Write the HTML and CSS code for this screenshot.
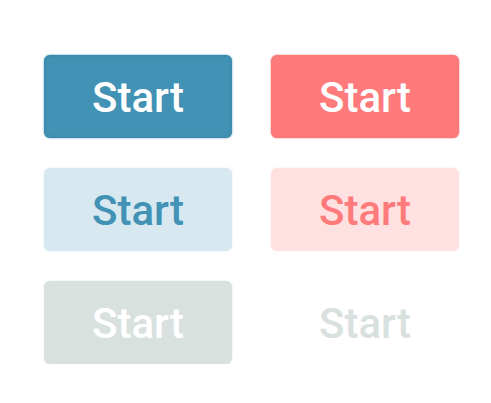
FILE: index.html
```html
<!DOCTYPE html>
<html>
<head>
<meta charset="utf-8">
<link rel="stylesheet" href="styles.css">
</head>
<body>
<div class="grid">
  <button class="btn primary">Start</button>
  <button class="btn danger">Start</button>
  <button class="btn primary-soft">Start</button>
  <button class="btn danger-soft">Start</button>
  <button class="btn disabled">Start</button>
  <button class="btn disabled-ghost">Start</button>
</div>
</body>
</html>
```
FILE: styles.css
```css
html, body {
  margin: 0;
  padding: 0;
  background: #ffffff;
}
body {
  padding: 55px 0 0 44px;
  font-family: Roboto, "Liberation Sans", sans-serif;
}
.grid {
  display: grid;
  grid-template-columns: 188px 188px;
  grid-auto-rows: 83px;
  column-gap: 39px;
  row-gap: 30px;
}
.btn {
  border: none;
  margin: 0;
  padding: 0;
  border-radius: 6px;
  font-family: Roboto, "Liberation Sans", sans-serif;
  font-weight: 500;
  font-size: 42px;
  display: flex;
  align-items: center;
  justify-content: center;
  padding-top: 2px;
}
.primary {
  background: #4192b5;
  color: #ffffff;
  box-shadow: 0 0 2px #4192b5, inset 0 0 4px rgba(0, 0, 0, 0.12);
}
.danger {
  background: #ff7b7b;
  color: #ffffff;
  box-shadow: 0 0 2px #ff7b7b, inset 0 0 4px rgba(0, 0, 0, 0.06);
}
.primary-soft {
  background: #d8e8f0;
  color: #4192b5;
  box-shadow: 0 0 2px #d8e8f0;
}
.danger-soft {
  background: #ffe1e1;
  color: #ff7b7b;
  box-shadow: 0 0 2px #ffe1e1;
}
.disabled {
  background: #d9e1df;
  color: #ffffff;
  box-shadow: 0 0 2px #d9e1df;
}
.disabled-ghost {
  background: transparent;
  color: #d9e1df;
}
```
